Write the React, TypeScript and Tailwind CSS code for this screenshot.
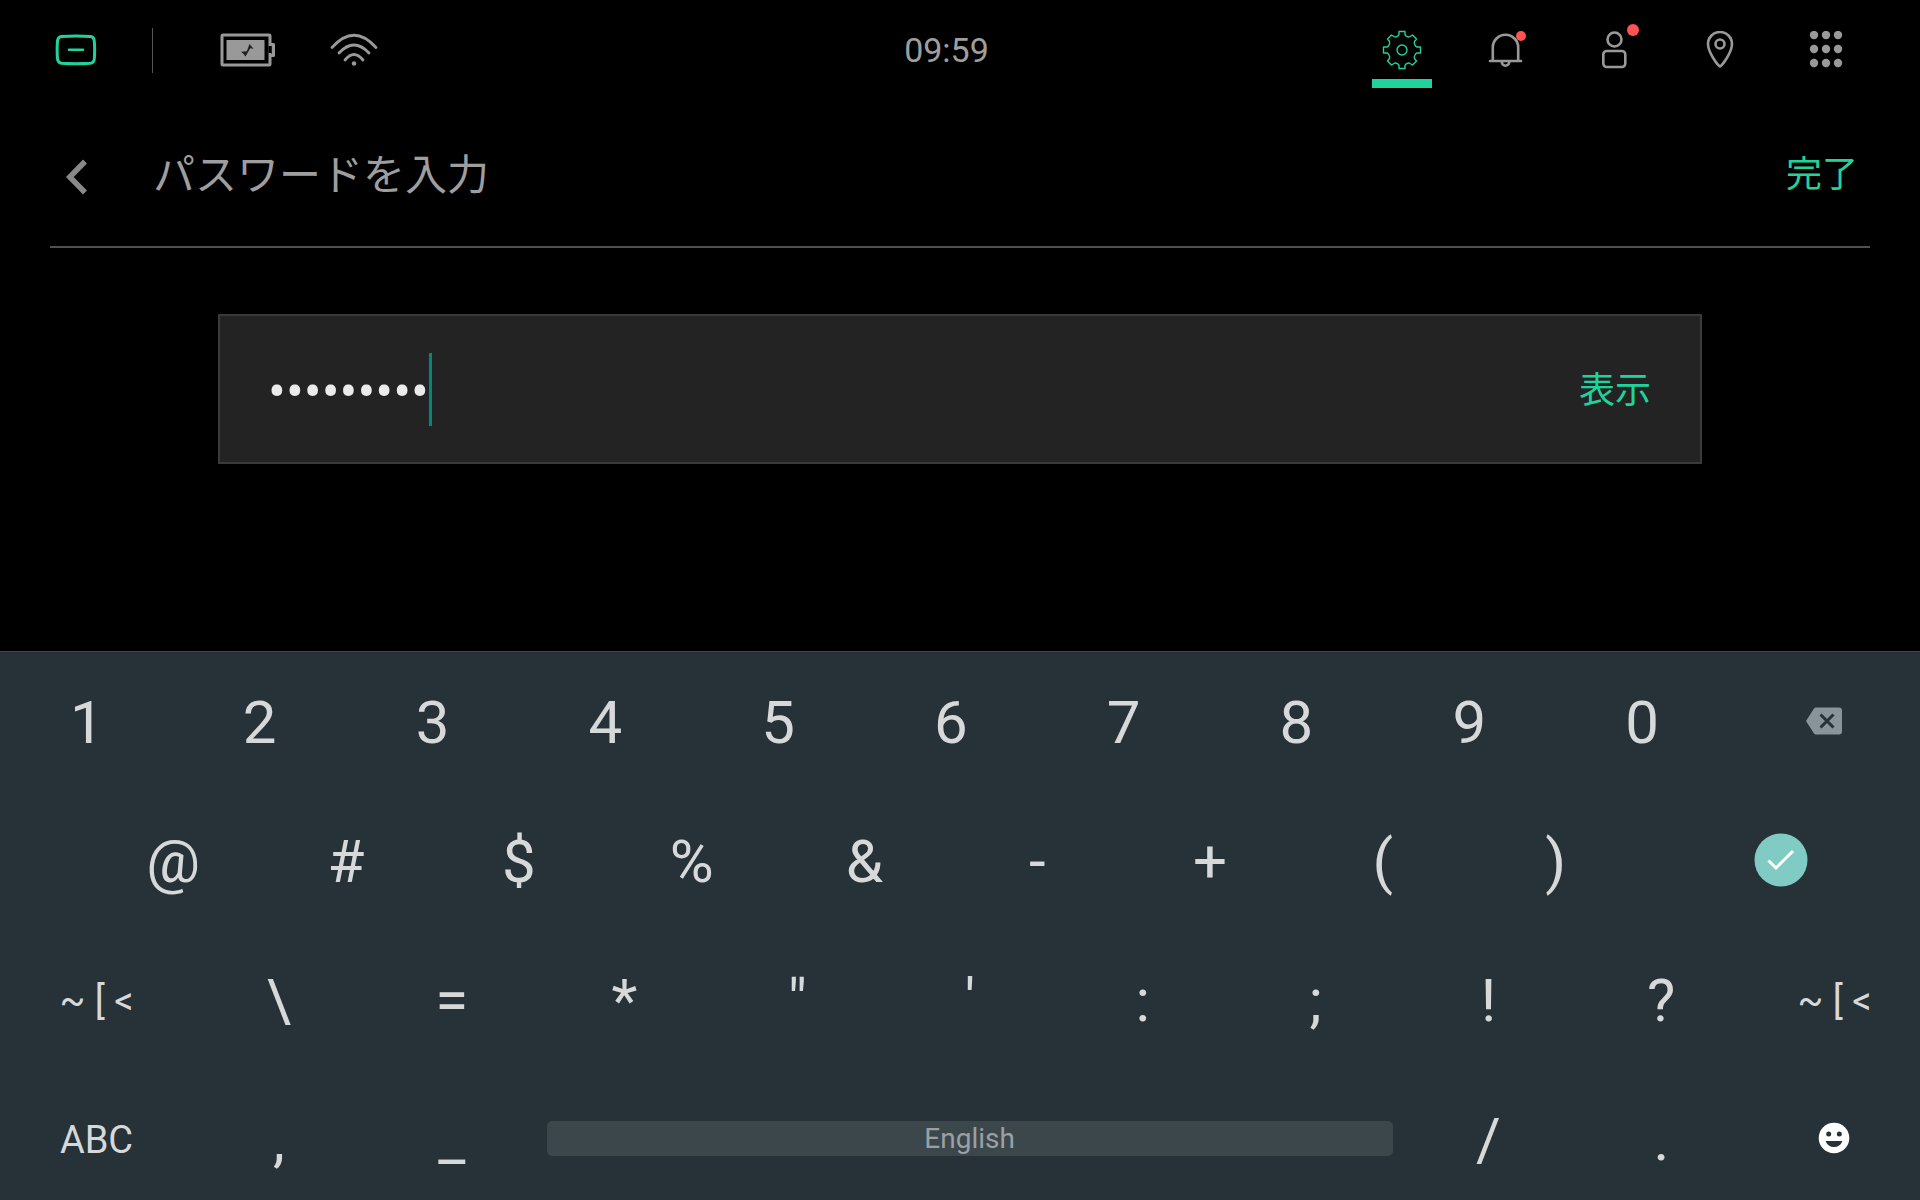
import { useState } from "react";
import type { ReactNode } from "react";

function ChargerIcon() {
  return (
    <svg width="42" height="32" viewBox="0 0 42 32" fill="none" stroke="#20d39c" strokeWidth="3" strokeLinecap="round" aria-hidden="true">
      <path d="M6.500 2.500Q21 1.500 35.500 2.500Q39 2.800 39.300 7Q40 16 39.300 25Q39 28.800 35.500 29.200Q21 30.200 6.500 29.200Q3 28.800 2.500 25Q1.800 16 2.500 7Q3 2.800 6.500 2.500Z" />
      <path d="M14 15.800H28" strokeWidth="2.600" />
    </svg>
  );
}

function BatteryIcon() {
  return (
    <svg width="56" height="34" viewBox="0 0 56 34" fill="none" aria-hidden="true">
      <rect x="2" y="2" width="48" height="30" rx="1" stroke="#999" strokeWidth="3" />
      <path d="M50 11.500H53.500V22.500H50" stroke="#999" strokeWidth="3" strokeLinejoin="round" />
      <path d="M48.500 13H51.500V20H48.500Z" fill="#000" />
      <rect x="6.500" y="7" width="38" height="20" fill="#999" />
      <path d="M29.500 11L26.800 18.300L21 18.800Q23 20 25.500 23.500L30.300 15.200L33.500 15.800Q31 12.500 29.500 11Z" fill="#222" />
    </svg>
  );
}

function WifiIcon() {
  return (
    <svg width="48" height="34" viewBox="0 0 48 34" fill="none" stroke="#999" strokeWidth="2.800" strokeLinecap="round" aria-hidden="true">
      <path d="M2 14.500Q24 -10 46 14.500" />
      <path d="M9 20Q24 4 39 20" />
      <path d="M15 27Q24 16 33 27" />
      <circle cx="24" cy="30.500" r="2.200" fill="#999" stroke="none" />
    </svg>
  );
}

function GearIcon() {
  return (
    <svg width="40" height="40" viewBox="0 0 40 40" fill="none" stroke="#20d39c" strokeWidth="1.400" strokeLinejoin="round" aria-hidden="true">
      <path d="M17 1.500H23V4.500Q23.500 6 25 6.500Q26.500 7.500 28 6.500L30.500 5L34.500 9L32.500 11.500Q31.800 13 33 15Q33.500 16.500 35 17H38.500V23H35Q33.500 23.500 33 25Q31.800 27 32.500 28.500L34.500 31L30.500 35L28 33.500Q26.500 32.500 25 33.500Q23.500 34 23 35.500V38.500H17V35.500Q16.500 34 15 33.500Q13.500 32.500 12 33.500L9.500 35L5.500 31L7.500 28.500Q8.200 27 7 25Q6.500 23.500 5 23H1.500V17H5Q6.500 16.500 7 15Q8.200 13 7.500 11.500L5.500 9L9.500 5L12 6.500Q13.500 7.500 15 6.500Q16.500 6 17 4.500Z" />
      <circle cx="20" cy="20" r="5" />
    </svg>
  );
}

function BellIcon() {
  return (
    <svg width="40" height="36" viewBox="0 0 40 36" fill="none" stroke="#999" strokeWidth="2.600" aria-hidden="true">
      <path d="M4.800 28.500V15.500a12.700 12.700 0 0 1 25.400 0V28.500" />
      <path d="M2 29H33" strokeLinecap="round" />
      <path d="M13.800 30a3.700 3.700 0 0 0 7.400 0" />
    </svg>
  );
}

function PersonIcon() {
  return (
    <svg width="26" height="38" viewBox="0 0 26 38" fill="none" stroke="#999" strokeWidth="2.600" aria-hidden="true">
      <circle cx="13.500" cy="8.500" r="7" />
      <rect x="2.300" y="20" width="22" height="16" rx="3.500" />
    </svg>
  );
}

function PinIcon() {
  return (
    <svg width="28" height="38" viewBox="0 0 28 38" fill="none" stroke="#999" strokeWidth="2.600" strokeLinejoin="round" aria-hidden="true">
      <path d="M14 35.500C11 33.500 2 21 2 13a12 12 0 0 1 24 0C26 21 17 33.500 14 35.500Z" />
      <circle cx="14" cy="13" r="4.500" />
    </svg>
  );
}

function AppsIcon() {
  return (
    <svg width="34" height="38" viewBox="0 0 34 38" fill="#999" aria-hidden="true">
      {[4, 18, 32].map((y) => [5, 17, 29].map((x) => <circle key={`${x}-${y}`} cx={x} cy={y} r="4.200" />))}
    </svg>
  );
}

function BackspaceIcon() {
  return (
    <svg width="36" height="28" viewBox="0 0 36 28" aria-hidden="true">
      <path d="M10 0.500H33a3 3 0 0 1 3 3V24.500a3 3 0 0 1-3 3H10a2.500 2.500 0 0 1-2-1L0 14L8 1.500a2.500 2.500 0 0 1 2-1Z" fill="#89949a" />
      <path d="M14.500 7.500L27.500 20.500M27.500 7.500L14.500 20.500" stroke="#263238" strokeWidth="3" />
    </svg>
  );
}

function CheckIcon() {
  return (
    <svg width="54" height="54" viewBox="0 0 54 54" aria-hidden="true">
      <circle cx="27" cy="27" r="26.500" fill="#80cbc4" />
      <path d="M14.500 27.500L22 35L39 18" fill="none" stroke="#fff" strokeWidth="3" />
    </svg>
  );
}

function SmileIcon() {
  return (
    <svg width="32" height="32" viewBox="0 0 32 32" aria-hidden="true">
      <circle cx="16" cy="16" r="15.300" fill="#fff" />
      <circle cx="10.700" cy="12" r="2.500" fill="#263238" />
      <circle cx="21.300" cy="12" r="2.500" fill="#263238" />
      <path d="M7.500 19H24.500Q22 25 16 25T7.500 19Z" fill="#263238" />
    </svg>
  );
}

function NavButton({ label, active, alert, children }: { label: string; active?: boolean; alert?: ReactNode; children: ReactNode }) {
  return (
    <button type="button" aria-label={label} className="relative flex h-full w-[60px] items-center justify-center">
      {children}
      {alert}
      {active && <span className="absolute bottom-3 left-0 h-[9px] w-full bg-[#20d39c]" />}
    </button>
  );
}

const characterKey = "w-[9%] pl-px text-[60px]";

function Key({ label, className = characterKey }: { label: string; className?: string }) {
  return (
    <button type="button" className={`flex h-full shrink-0 items-center justify-center whitespace-pre leading-none ${className}`}>
      {label}
    </button>
  );
}

function IconKey({ label, className, children }: { label: string; className: string; children: ReactNode }) {
  return (
    <button type="button" aria-label={label} className={`flex h-full items-center justify-center pb-1 ${className}`}>
      {children}
    </button>
  );
}

export default function App() {
  const [password, setPassword] = useState("password1");
  const [visible, setVisible] = useState(false);

  return (
    <div className="flex min-h-screen flex-col bg-black font-['Roboto','Noto_Sans_CJK_JP',sans-serif] text-[#9e9e9e]">
      <header className="grid h-[100px] grid-cols-[1fr_auto_1fr] items-center pr-[64px] pl-[55px]">
        <div className="flex items-center">
          <ChargerIcon />
          <span className="ml-[55px] h-[45px] w-px bg-[#555]" />
          <span className="ml-[67px]"><BatteryIcon /></span>
          <span className="ml-[54px]"><WifiIcon /></span>
        </div>
        <time className="mr-[18px] text-[34px]">09:59</time>
        <nav className="flex h-full items-center justify-end gap-[46px]">
          <NavButton label="設定" active><GearIcon /></NavButton>
          <NavButton label="通知" alert={<span className="absolute top-[31px] right-3 size-[10px] rounded-full bg-[#ff5252]" />}><BellIcon /></NavButton>
          <NavButton label="プロフィール" alert={<span className="absolute top-6 right-[5px] size-3 rounded-full bg-[#ff5252]" />}><PersonIcon /></NavButton>
          <NavButton label="位置情報"><PinIcon /></NavButton>
          <NavButton label="アプリ"><AppsIcon /></NavButton>
        </nav>
      </header>

      <main className="px-[50px]">
        <div className="flex h-[148px] items-center border-b-2 border-[#505050] pt-2 pr-3">
          <button type="button" aria-label="戻る" className="ml-4">
            <svg width="22" height="36" viewBox="0 0 22 36" fill="none" stroke="#888" strokeWidth="5.500" aria-hidden="true">
              <path d="M19 2.500L3.800 18L19 33.500" />
            </svg>
          </button>
          <h1 className="ml-[65px] pb-0.5 text-[42px] leading-[60px]">パスワードを入力</h1>
          <button type="button" className="ml-auto pb-1 text-[36px] leading-[52px] text-[#20d39c]">完了</button>
        </div>

        <div className="mx-[168px] mt-[66px] flex h-[150px] items-center border-2 border-[#3a3a3a] bg-[#232323] pr-[49px] pl-12">
          <div className="relative flex flex-1 items-center">
            <input
              aria-label="パスワード"
              type={visible ? "text" : "password"}
              value={password}
              onChange={(e) => setPassword(e.target.value)}
              className="h-[73px] w-full bg-transparent pt-2 text-[53px] text-[#ebebeb] outline-none"
            />
            <span className="absolute left-[161px] h-[73px] w-[3px] bg-[#00897b]" />
          </div>
          <button type="button" onClick={() => setVisible(!visible)} className="pt-1 text-[36px] leading-[52px] text-[#20d39c]">表示</button>
        </div>
      </main>

      <section aria-label="キーボード" className="mt-auto flex flex-col gap-[21px] border-t border-[#3c474c] bg-[#263238] pt-3 pb-px text-[#d6d8da]">
        <div className="flex h-[118px]">
          {["1", "2", "3", "4", "5", "6", "7", "8", "9", "0"].map((k) => <Key key={k} label={k} />)}
          <IconKey label="削除" className="flex-1"><BackspaceIcon /></IconKey>
        </div>
        <div className="flex h-[118px]">
          <div className="w-[4.5%]" />
          {["@", "#", "$", "%", "&", "-", "+", "(", ")"].map((k) => <Key key={k} label={k} />)}
          <IconKey label="確定" className="flex-1"><CheckIcon /></IconKey>
        </div>
        <div className="flex h-[118px]">
          <Key label="~ [ <" className="w-[10%] pl-px text-[38px]" />
          {["\\", "=", "*", '"', "'", ":", ";", "!", "?"].map((k) => <Key key={k} label={k} />)}
          <Key label="~ [ <" className="w-[9%] pl-0.5 text-[38px]" />
        </div>
        <div className="flex h-[118px]">
          <Key label="ABC" className="w-[10%] pl-px text-[38px]" />
          <Key label="," />
          <Key label="_" />
          <button type="button" className="flex h-full w-[45%] items-center px-[9px] pb-1">
            <span className="h-[35px] w-full rounded-[5px] bg-[#3c474c] text-[28px] leading-[35px] text-[#9aa0a3]">English</span>
          </button>
          <Key label="/" />
          <Key label="." />
          <IconKey label="絵文字" className="flex-1"><SmileIcon /></IconKey>
        </div>
      </section>
    </div>
  );
}
